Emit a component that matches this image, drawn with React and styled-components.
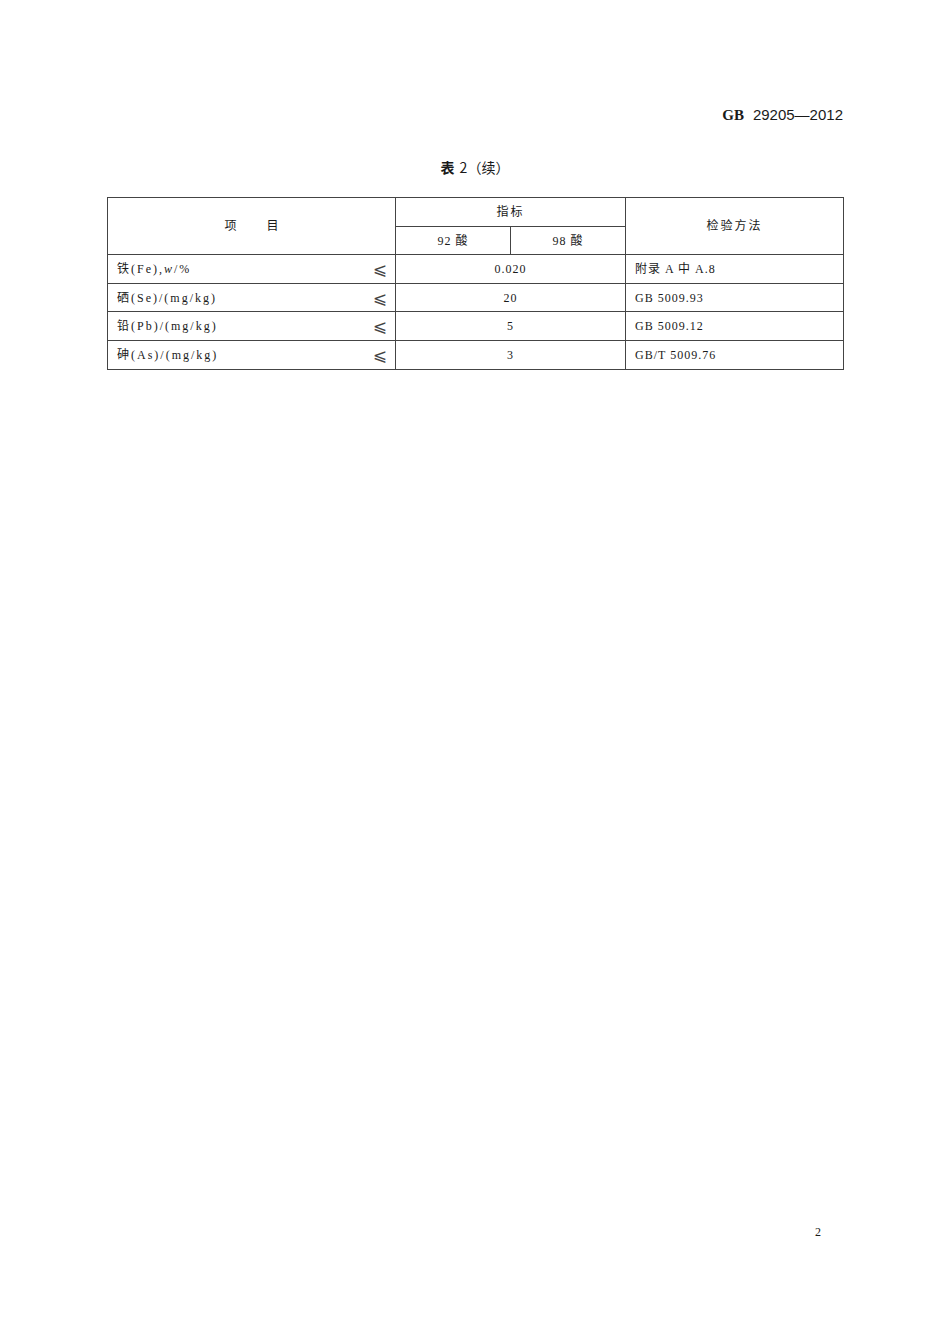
import React from "react";
import styled, { createGlobalStyle } from "styled-components";

const GlobalStyle = createGlobalStyle`
  html, body {
    margin: 0;
    padding: 0;
    background: #ffffff;
  }
  body {
    font-family: "Liberation Serif", "Noto Sans CJK SC", serif;
    color: #1a1a1a;
  }
`;

const Page = styled.div`
  width: 950px;
  height: 1344px;
  box-sizing: border-box;
  padding: 106px 107px 0 107px;
  display: flex;
  flex-direction: column;
`;

const DocNo = styled.div`
  align-self: flex-end;
  font-size: 15px;
  line-height: 18px;
  display: flex;
  align-items: baseline;
  gap: 9px;
`;

const DocCode = styled.span`
  font-family: "Liberation Serif", serif;
  font-weight: 700;
`;

const DocNum = styled.span`
  font-family: "Liberation Sans", sans-serif;
`;

const Caption = styled.div`
  margin-top: 33px;
  text-align: center;
  font-family: "Noto Sans CJK SC", sans-serif;
  font-size: 14px;
  line-height: 20px;
`;

const CaptionMark = styled.span`
  font-weight: 700;
  margin-right: 5px;
`;

const Table = styled.table`
  margin-top: 20px;
  width: 736px;
  border-collapse: collapse;
  border: 1.5px solid #222;
  table-layout: fixed;
  font-size: 12px;
`;

const Cell = styled.td`
  border: 1px solid #444;
  height: ${(p) => p.$h || 27.7}px;
  padding: 0;
  text-align: ${(p) => p.$align || "center"};
  padding-left: ${(p) => (p.$align === "left" ? "9px" : "0")};
  letter-spacing: ${(p) => (p.$wide ? 2 : 1)}px;
  line-height: 14px;
  vertical-align: middle;
  font-weight: normal;
`;

const HeadSpread = styled.span`
  letter-spacing: 0;
`;

const ItemCell = styled.div`
  display: flex;
  justify-content: space-between;
  align-items: center;
  padding-right: 8px;
`;

const ItemText = styled.span`
  letter-spacing: 2px;
`;

const Le = styled.span`
  font-family: "DejaVu Sans", sans-serif;
  font-size: 17px;
  line-height: 14px;
  color: #444;
  letter-spacing: 0;
`;

const Italic = styled.i`
  font-style: italic;
`;

const Footer = styled.div`
  margin-top: auto;
  margin-bottom: 104px;
  align-self: flex-end;
  margin-right: 22px;
  font-size: 12px;
`;

const rows = [
  { item: <>铁(Fe),<Italic>w</Italic>/%</>, value: "0.020", method: "附录 A 中 A.8" },
  { item: "硒(Se)/(mg/kg)", value: "20", method: "GB 5009.93" },
  { item: "铅(Pb)/(mg/kg)", value: "5", method: "GB 5009.12" },
  { item: "砷(As)/(mg/kg)", value: "3", method: "GB/T 5009.76" },
];

export default function App() {
  return (
    <>
      <GlobalStyle />
      <Page>
        <DocNo>
          <DocCode>GB</DocCode>
          <DocNum>29205—2012</DocNum>
        </DocNo>
        <Caption>
          <CaptionMark>表</CaptionMark>2（续）
        </Caption>
        <Table>
          <colgroup>
            <col style={{ width: 288 }} />
            <col style={{ width: 115 }} />
            <col style={{ width: 115 }} />
            <col style={{ width: 218 }} />
          </colgroup>
          <thead>
            <tr>
              <Cell as="th" rowSpan={2} $h={28}>
                <HeadSpread>项&emsp;&emsp;&ensp;目</HeadSpread>
              </Cell>
              <Cell as="th" colSpan={2} $h={28} $wide>指标</Cell>
              <Cell as="th" rowSpan={2} $h={28} $wide>检验方法</Cell>
            </tr>
            <tr>
              <Cell as="th" $h={27}>92 酸</Cell>
              <Cell as="th" $h={27}>98 酸</Cell>
            </tr>
          </thead>
          <tbody>
            {rows.map((r, i) => (
              <tr key={i}>
                <Cell $align="left">
                  <ItemCell>
                    <ItemText>{r.item}</ItemText>
                    <Le>⩽</Le>
                  </ItemCell>
                </Cell>
                <Cell colSpan={2}>{r.value}</Cell>
                <Cell $align="left">{r.method}</Cell>
              </tr>
            ))}
          </tbody>
        </Table>
        <Footer>2</Footer>
      </Page>
    </>
  );
}
